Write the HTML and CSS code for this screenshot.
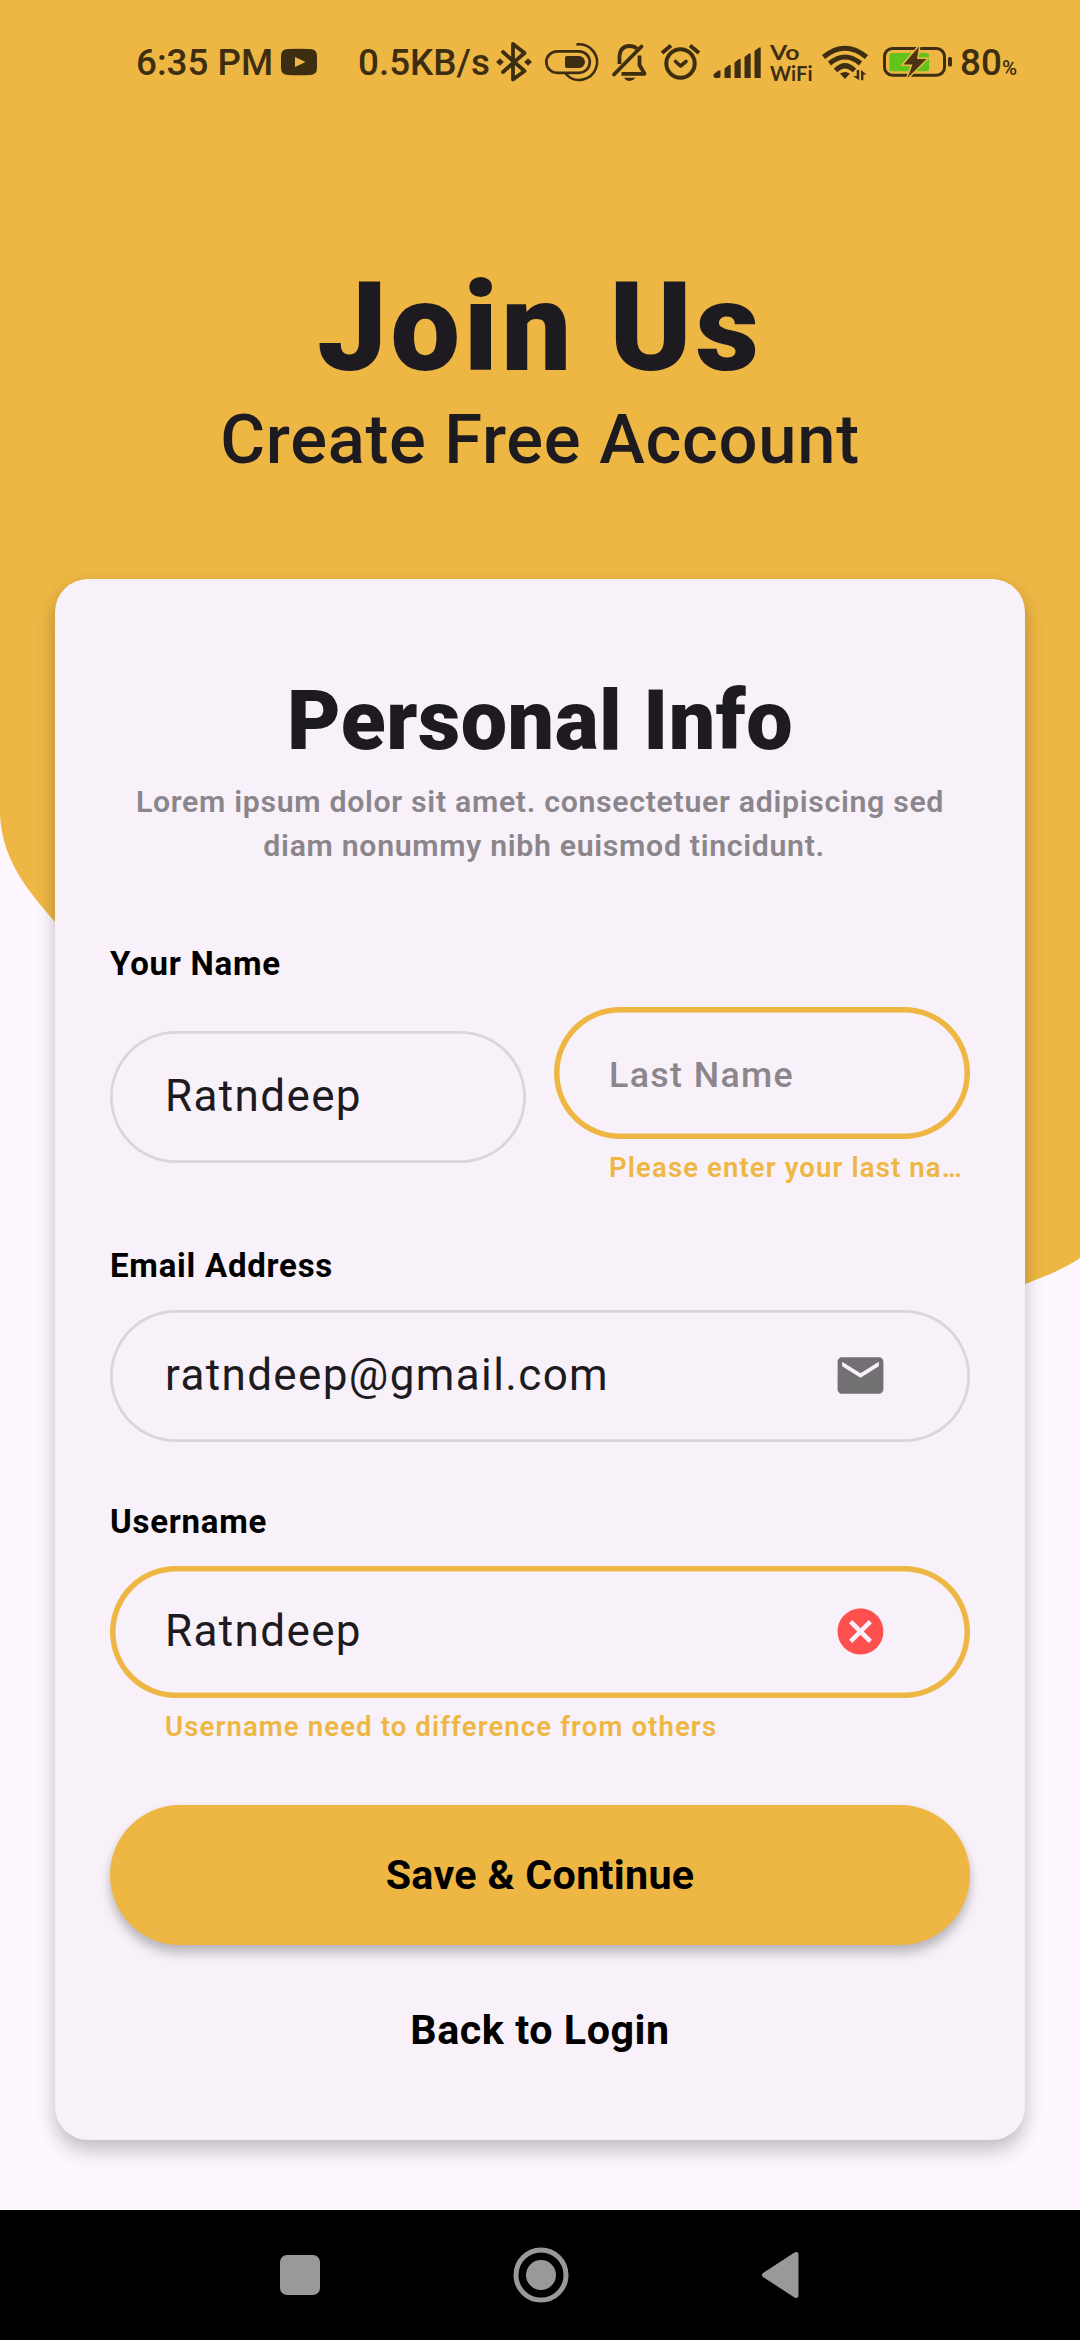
FILE: index.html
```html
<!DOCTYPE html>
<html lang="en">
<head>
<meta charset="utf-8">
<title>Join Us</title>
<link rel="stylesheet" href="styles.css">
</head>
<body>
<div class="screen">
  <svg class="backdrop" viewBox="0 0 1080 1400" aria-hidden="true">
    <path d="M0 0H1080V1258C1064 1269 1046 1276 1025 1284C700 1400 330 1210 55 922C28 891 2 860 0 815Z"/>
  </svg>

  <header class="status">
    <span class="status-text time">6:35 PM</span>
    <svg class="status-icon" width="40" viewBox="279 0 40 110">
      <path d="M288 49Q299 48.4 310 49Q317 49 317 56V68Q317 75 310 75Q299 75.6 288 75Q281 75 281 68V56Q281 49 288 49Z"/>
      <path class="gold" d="M295 57L305.500 62L295 67Z"/>
    </svg>
    <span class="status-text speed">0.5KB/s</span>
    <svg class="status-icon line" width="46" viewBox="490 0 46 110">
      <path stroke-width="3.800" d="M503 52L524.500 71L513 79.500V44L524.500 53L503 72"/>
      <path class="solid" d="M496 62L500 58.200L503.800 62L500 65.800ZM524.200 62L528 58.200L532 62L528 65.800Z"/>
    </svg>
    <svg class="status-icon line" width="70" viewBox="536 0 70 110">
      <rect x="546.300" y="51.300" width="43.500" height="21.500" rx="10.750" stroke-width="2.700"/>
      <path stroke-width="2.600" d="M577.500 44.400A17.800 17.800 0 1 1 566 74"/>
      <path class="solid" d="M567 56H579A6 6 0 0 1 579 68H567Q565 68 565 66V58Q565 56 567 56Z"/>
    </svg>
    <svg class="status-icon line" width="46" viewBox="606 0 46 110">
      <path stroke-width="3.800" d="M614 74.500L641.500 46.500"/>
      <path stroke-width="3.800" stroke-linecap="butt" d="M619.500 64V56Q620.500 46 629.500 46Q634 46 637 48.500M639.500 55.500V65L644.500 73.800H621.500"/>
      <path class="solid" d="M624 77.800H635.500Q633 81 629.700 81Q626 81 624 77.800Z"/>
    </svg>
    <svg class="status-icon line" width="56" viewBox="652 0 56 110">
      <circle cx="680.500" cy="63.500" r="14.200" stroke-width="4"/>
      <path stroke-width="3.600" d="M675.500 61.500L680.500 66L686 61.500"/>
      <path stroke-width="4" stroke-linecap="butt" d="M662 53L671 45.500M699 53L690 45.500"/>
    </svg>
    <svg class="status-icon" width="58" viewBox="708 0 58 110">
      <path d="M713.500 76V74.500Q714 73.500 718.500 70.500H720.500V76Q720.500 78 718.500 78H715.500Q713.500 78 713.500 76ZM724.500 78V68.500L729 65H730.700V78ZM734.500 78V62.500L739 59H740.700V78ZM744.500 78V57L749 53.500H750.700V78ZM754.500 78V51L759 47.500H760.700V78Z"/>
    </svg>
    <svg class="status-icon vowifi" width="52" viewBox="766 0 52 110">
      <text x="770" y="59.500" textLength="29.500" lengthAdjust="spacingAndGlyphs">Vo</text>
      <text x="770" y="80.500" textLength="42.500" lengthAdjust="spacingAndGlyphs">WiFi</text>
    </svg>
    <svg class="status-icon line" width="58" viewBox="818 0 58 110">
      <g stroke-width="5" stroke-linecap="butt">
        <path d="M823.500 57Q845 39.500 866.500 57"/>
        <path d="M829.500 63.500Q845 50.500 860.500 63.500"/>
        <path d="M835.500 70.500Q845 61 854.500 70.500"/>
      </g>
      <path class="solid" d="M840 73.500Q845 70.500 850 73.500L845 79Z"/>
      <path class="solid" d="M856.700 70H859.200V80.200L853 76H856.700ZM861 80.200V70L866.500 74.500H863.400V80.200Z"/>
    </svg>
    <svg class="status-icon line" width="82" viewBox="876 0 82 110">
      <rect x="884.500" y="48.500" width="60" height="26.700" rx="8" stroke-width="3"/>
      <rect class="charge" x="889.500" y="53" width="39.500" height="18.300" rx="2.500"/>
      <path class="bolt" d="M919 46.500L903.500 64.500H912.500L907.500 78L926.500 59H917Z"/>
      <rect class="solid" x="948" y="57" width="4" height="9.500" rx="1.500"/>
    </svg>
    <span class="status-text level">80</span><span class="status-text percent">%</span>
  </header>

  <section class="hero">
    <h1 class="hero-title">Join Us</h1>
    <p class="hero-sub">Create Free Account</p>
  </section>

  <main class="card">
    <h2 class="card-title">Personal Info</h2>
    <p class="card-text">Lorem ipsum dolor sit amet. consectetuer adipiscing sed<br>&nbsp;diam nonummy nibh euismod tincidunt.</p>

    <div class="label label-name">Your Name</div>
    <div class="name-row">
      <div class="field"><span class="value">Ratndeep</span></div>
      <div class="name-col">
        <div class="field invalid"><span class="hint">Last Name</span></div>
        <div class="error">Please enter your last na…</div>
      </div>
    </div>

    <div class="label label-email">Email Address</div>
    <div class="field">
      <span class="value">ratndeep@gmail.com</span>
      <svg class="field-icon mail" viewBox="0 0 24 24"><path d="M20 4H4c-1.100 0-1.990.9-1.990 2L2 18c0 1.100.9 2 2 2h16c1.100 0 2-.9 2-2V6c0-1.100-.9-2-2-2zm0 4l-8 5-8-5V6l8 5 8-5v2z"/></svg>
    </div>

    <div class="label label-user">Username</div>
    <div class="field invalid">
      <span class="value">Ratndeep</span>
      <svg class="field-icon cancel" viewBox="0 0 24 24"><path d="M12 2C6.470 2 2 6.470 2 12s4.470 10 10 10 10-4.470 10-10S17.530 2 12 2zm5 13.590L15.590 17 12 13.410 8.410 17 7 15.590 10.590 12 7 8.410 8.410 7 12 10.590 15.590 7 17 8.410 13.410 12 17 15.590z"/></svg>
    </div>
    <div class="error">Username need to difference from others</div>

    <div class="save">Save &amp; Continue</div>
    <div class="back">Back to Login</div>
  </main>

  <nav class="navbar">
    <svg width="40" height="40" viewBox="0 0 40 40"><rect width="40" height="40" rx="7"/></svg>
    <svg width="56" height="56" viewBox="0 0 56 56"><circle class="ring" cx="28" cy="28" r="25"/><circle cx="28" cy="28" r="15"/></svg>
    <svg width="38" height="48" viewBox="0 0 38 48"><path d="M2 22Q0 24 2 26L33.500 46.500Q37.500 48 37.500 44V4Q37.500 0 33.500 1.500Z"/></svg>
  </nav>
</div>
</body>
</html>
```
FILE: styles.css
```css
:root {
  --gold: #eeb744;
  --ink: #1d1b20;
  --status: #3d2e12;
  --surface: #f8f1f9;
}
* { box-sizing: border-box; }
body { margin: 0; font-family: Roboto, "Noto Sans", sans-serif; }
h1, h2, p { margin: 0; }
svg { display: block; flex: none; }

.screen {
  position: relative;
  width: 1080px;
  height: 2340px;
  overflow: hidden;
  display: flex;
  flex-direction: column;
  background: #fef7ff;
}
.backdrop { position: absolute; left: 0; top: 0; width: 1080px; height: 1400px; fill: var(--gold); }

/* Status bar */
.status { position: relative; display: flex; height: 110px; padding-left: 136px; color: var(--status); white-space: nowrap; }
.status-icon { height: 110px; fill: var(--status); }
.status-icon.line { fill: none; stroke: var(--status); stroke-linecap: round; stroke-linejoin: round; }
.status-icon .solid { fill: var(--status); stroke: none; }
.status-icon .gold { fill: var(--gold); }
.status-icon .charge { fill: #61c41a; stroke: none; }
.status-icon .bolt { fill: #4b3413; stroke: var(--gold); stroke-width: 3; stroke-linejoin: miter; paint-order: stroke; }
.vowifi { font: 700 20.5px Lato, sans-serif; }
.status-text { flex: none; font-size: 36.8px; font-weight: 500; line-height: 126px; }
.time { width: 143px; }
.speed { width: 132px; margin-left: 39px; }
.level { width: 42px; margin-left: 2px; }
.percent { font-size: 20.5px; line-height: 136px; }

/* Heading */
.hero { position: relative; height: 468.5px; text-align: center; color: var(--ink); }
.hero-title { margin-top: 145px; font-size: 123.75px; line-height: 145px; font-weight: 900; letter-spacing: 3.7px; }
.hero-sub { font-size: 68.75px; line-height: 80px; font-weight: 500; letter-spacing: .69px; }

/* Card */
.card {
  position: relative;
  margin: 0 55px;
  height: 1561.5px;
  padding: 93px 55px 0;
  border-radius: 33px;
  background: var(--surface);
  box-shadow: 0 12px 20px rgba(0, 0, 0, .19), 0 4px 16px rgba(0, 0, 0, .07);
}
.card-title { font-size: 82.5px; line-height: 98px; font-weight: 900; letter-spacing: .5px; text-align: center; color: var(--ink); }
.card-text { margin-top: 10px; font-size: 30.25px; line-height: 44px; font-weight: 600; letter-spacing: .69px; text-align: center; color: #8a868b; white-space: nowrap; }
.label { font-size: 33px; line-height: 40px; font-weight: 700; color: #000; letter-spacing: .75px; }
.label-name { margin-top: 76px; }
.label-email { margin-top: 59px; }
.label-user { margin-top: 60px; }
.name-row { display: grid; grid-template-columns: 416px 416px; gap: 28px; align-items: center; margin-top: 23.3px; }
.field { display: flex; align-items: center; height: 132px; padding: 0 82.5px 0 55px; border-radius: 66px; box-shadow: inset 0 0 0 2.75px #dad4dc; }
.field.invalid { box-shadow: inset 0 0 0 5.5px var(--gold); }
.label + .field { margin-top: 24px; }
.value { padding-bottom: 2px; font-size: 44px; line-height: 52px; letter-spacing: 1.375px; color: var(--ink); }
.hint { padding-top: 4px; font-size: 35.75px; font-weight: 500; letter-spacing: 1.375px; color: #8a868b; }
.error { margin-top: 11.4px; padding-left: 55px; font-size: 27.5px; line-height: 36.6px; font-weight: 600; letter-spacing: 1.13px; color: var(--gold); white-space: nowrap; }
.field-icon { width: 55px; height: 55px; margin-left: auto; }
.mail { fill: #737074; }
.cancel { fill: #ff5050; }
.save { margin-top: 59px; height: 140px; border-radius: 70px; background: var(--gold); color: #000; text-align: center; font-size: 41.25px; font-weight: 700; line-height: 141px; letter-spacing: .28px; box-shadow: 0 9px 11px rgba(0, 0, 0, .2), 0 3px 10px rgba(0, 0, 0, .07); }
.back { margin-top: 60px; color: #000; text-align: center; font-size: 41.25px; font-weight: 700; line-height: 50px; letter-spacing: .55px; }

/* Navigation bar */
.navbar { margin-top: auto; height: 130px; padding: 0 281px 0 280px; display: flex; align-items: center; justify-content: space-between; background: #000; fill: #999; }
.ring { fill: none; stroke: #999; stroke-width: 5; }
```
